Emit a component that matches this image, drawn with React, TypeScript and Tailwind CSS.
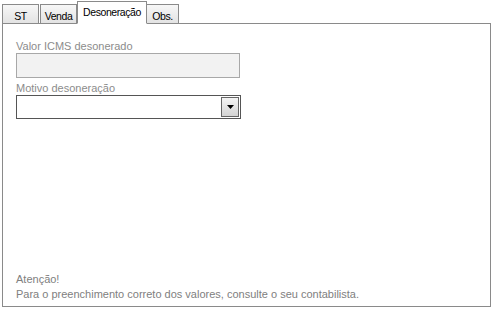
import React from 'react';

const tabs = [
  { label: 'ST', cls: 'w-[37px] mr-px' },
  { label: 'Venda', cls: 'w-[37px]' },
  { label: 'Desoneração', cls: 'w-[70px]' },
  { label: 'Obs.', cls: 'w-[33px] -ml-px' },
];

const App: React.FC = () => {
  const active = 'Desoneração';

  return (
    <div className="w-[492px] h-[310px] bg-white font-['Liberation_Sans',Arial,sans-serif] pl-[2px]">
      {/* tab strip */}
      <div className="flex items-end h-[23px] relative z-10">
        {tabs.map((t) =>
          t.label === active ? (
            <div
              key={t.label}
              className={`${t.cls} h-[23px] -mb-px relative z-10 bg-white border border-[#8a8a8a] border-b-white text-[10.5px] tracking-[-0.04em] text-black text-center pt-[3px]`}
            >
              {t.label}
            </div>
          ) : (
            <div
              key={t.label}
              className={`${t.cls} h-[19px] bg-gradient-to-b from-[#f7f7f7] to-[#e3e3e3] border border-[#8a8a8a] border-b-0 text-[10.5px] tracking-[-0.04em] text-black text-center pt-[4px]`}
            >
              {t.label}
            </div>
          )
        )}
      </div>

      {/* panel */}
      <div className="w-[489px] h-[284px] border border-[#8a8a8a] flex flex-col pl-[13px] pt-[16px] pb-[4px] text-[11px]">
        <label className="text-[#8c8c8c] leading-[13px]">Valor ICMS desonerado</label>
        <div className="w-[224px] h-[25px] bg-[#f2f2f2] border border-[#a8a8a8]" />
        <label className="text-[#8c8c8c] leading-[13px] mt-[4px]">Motivo desoneração</label>
        <div className="w-[225px] h-[24px] border border-[#555555] flex justify-end items-center pr-[1px]">
          <div className="w-[18px] h-[20px] border border-[#666666] bg-gradient-to-b from-[#f4f4f4] to-[#d4d4d4] flex items-center justify-center">
            <svg width="7" height="4" viewBox="0 0 7 4">
              <polygon points="0,0 7,0 3.5,4" fill="#000" />
            </svg>
          </div>
        </div>
        <div className="flex-1" />
        <p className="text-[#808080] leading-[15px]">Atenção!</p>
        <p className="text-[#808080] leading-[15px]">
          Para o preenchimento correto dos valores, consulte o seu contabilista.
        </p>
      </div>
    </div>
  );
};

export default App;
